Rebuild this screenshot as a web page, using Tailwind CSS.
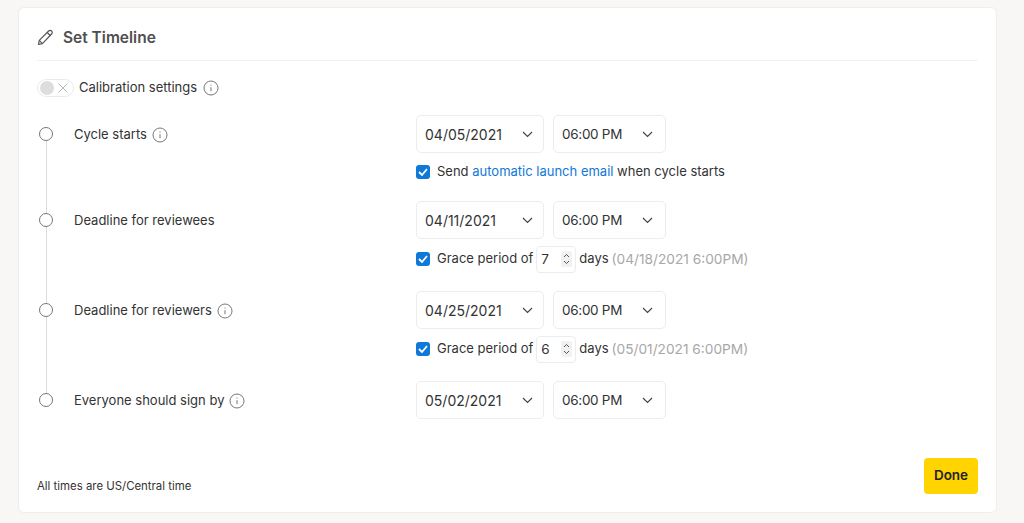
<!DOCTYPE html>
<html><head><meta charset="utf-8"><script src="https://cdn.jsdelivr.net/npm/@tailwindcss/browser@4"></script></head>
<body class="w-[1024px] h-[523px] overflow-hidden bg-[#f8f7f5] font-['Inter',sans-serif] text-[#333333] text-[13px]">
<div class="ml-[18px] mt-[7px] w-[979px] h-[506px] bg-white rounded-[6px] border border-[#eeeeec] px-[18px] flex flex-col">
  <div class="h-[53px] shrink-0 flex items-center gap-[9px] border-b border-[#f2f2f0] pt-[7px]">
    <svg class="w-[17px] h-[17px]" viewBox="0 0 17 17" fill="none" stroke="#555" stroke-width="1.2" stroke-linejoin="round"><path d="M1.5 15.5l.8-4.2L11.6 2a2 2 0 0 1 3 0 2.1 2.1 0 0 1 0 3l-9.2 9.6z"/><path d="M10.2 3.5l3.4 3.3M2.3 11.3l3.1 3.3"/></svg>
    <span class="text-[15.5px] font-semibold text-[#4f4f4f]">Set Timeline</span>
  </div>
  <div class="h-[20px] mt-[17px] shrink-0 flex items-center gap-[5px]">
    <div class="w-[37px] h-[18px] rounded-full border border-[#ebebeb] flex items-center pl-[2px] gap-[4px]">
      <span class="w-[14px] h-[14px] rounded-full bg-[#dddddd]"></span>
      <svg class="w-[10px] h-[10px]" viewBox="0 0 10 10" stroke="#b5b5b5" stroke-width="1"><path d="M.5.5l9 9M9.5.5l-9 9"/></svg>
    </div>
    <span>Calibration settings</span>
    <svg class="w-[16px] h-[16px] ml-[1px]" viewBox="0 0 16 16" fill="none" stroke="#777" stroke-width="1"><circle cx="8" cy="8" r="7"/><path d="M8 7.2v4M8 4.6v1"/></svg>
  </div>
  <div class="mt-[17px] flex flex-col">
    <!-- Row 1 -->
    <div class="h-[86px] flex">
      <div class="w-[18px] flex flex-col items-center mr-[19px] pt-[12px]">
        <span class="w-[14px] h-[14px] shrink-0 rounded-full border border-[#777]"></span><span class="w-px flex-1 bg-[#dddddd]"></span>
      </div>
      <div class="w-[342px] h-[40px] flex items-center gap-[5px]"><span>Cycle starts</span>
        <svg class="w-[16px] h-[16px]" viewBox="0 0 16 16" fill="none" stroke="#777" stroke-width="1"><circle cx="8" cy="8" r="7"/><path d="M8 7.2v4M8 4.6v1"/></svg></div>
      <div class="flex flex-col">
        <div class="flex gap-[9px]">
          <div class="w-[128px] h-[38px] border border-[#ececec] rounded-[5px] flex items-center justify-between pl-[8px] pr-[10px] text-[14px]">04/05/2021<svg class="w-[11px] h-[7px]" viewBox="0 0 11 7" fill="none" stroke="#444" stroke-width="1.2"><path d="M1 1l4.5 4.5L10 1"/></svg></div>
          <div class="w-[113px] h-[38px] border border-[#ececec] rounded-[5px] flex items-center justify-between pl-[8px] pr-[12px] text-[13.5px] tracking-[-0.3px]">06:00 PM<svg class="w-[11px] h-[7px]" viewBox="0 0 11 7" fill="none" stroke="#444" stroke-width="1.2"><path d="M1 1l4.5 4.5L10 1"/></svg></div>
        </div>
        <div class="h-[20px] mt-[9px] flex items-center gap-[7px]">
          <span class="w-[14px] h-[14px] rounded-[3px] bg-[#0f78d8] flex items-center justify-center"><svg class="w-[10px] h-[8px]" viewBox="0 0 10 8" fill="none" stroke="#fff" stroke-width="1.8"><path d="M1 4l3 3 5-6"/></svg></span>
          <span>Send <span class="text-[#0f78d8]">automatic launch email</span> when cycle starts</span>
        </div>
      </div>
    </div>
    <!-- Row 2 -->
    <div class="h-[90px] flex">
      <div class="w-[18px] flex flex-col items-center mr-[19px]">
        <span class="w-px h-[12px] bg-[#dddddd]"></span><span class="w-[14px] h-[14px] shrink-0 rounded-full border border-[#777]"></span><span class="w-px flex-1 bg-[#dddddd]"></span>
      </div>
      <div class="w-[342px] h-[40px] flex items-center"><span>Deadline for reviewees</span></div>
      <div class="flex flex-col">
        <div class="flex gap-[9px]">
          <div class="w-[128px] h-[38px] border border-[#ececec] rounded-[5px] flex items-center justify-between pl-[8px] pr-[10px] text-[14px]">04/11/2021<svg class="w-[11px] h-[7px]" viewBox="0 0 11 7" fill="none" stroke="#444" stroke-width="1.2"><path d="M1 1l4.5 4.5L10 1"/></svg></div>
          <div class="w-[113px] h-[38px] border border-[#ececec] rounded-[5px] flex items-center justify-between pl-[8px] pr-[12px] text-[13.5px] tracking-[-0.3px]">06:00 PM<svg class="w-[11px] h-[7px]" viewBox="0 0 11 7" fill="none" stroke="#444" stroke-width="1.2"><path d="M1 1l4.5 4.5L10 1"/></svg></div>
        </div>
        <div class="h-[28px] mt-[6px] flex items-center">
          <span class="w-[14px] h-[14px] mr-[7px] rounded-[3px] bg-[#0f78d8] flex items-center justify-center"><svg class="w-[10px] h-[8px]" viewBox="0 0 10 8" fill="none" stroke="#fff" stroke-width="1.8"><path d="M1 4l3 3 5-6"/></svg></span>
          <span>Grace period of</span>
          <div class="w-[40px] h-[27px] ml-[3px] mr-[3px] border border-[#ececec] rounded-[4px] flex items-center justify-between pl-[4px] pr-[3px] text-[13.5px]">7<svg class="w-[11px] h-[16px]" viewBox="0 0 11 16"><rect width="11" height="16" rx="2" fill="#f1f1f1"/><path d="M3 6l2.5-2.5L8 6M3 10l2.5 2.5L8 10" fill="none" stroke="#555" stroke-width="1"/></svg></div>
          <span>days</span><span class="ml-[3px] text-[13.7px] text-[#a8a8a8]">(04/18/2021 6:00PM)</span>
        </div>
      </div>
    </div>
    <!-- Row 3 -->
    <div class="h-[90px] flex">
      <div class="w-[18px] flex flex-col items-center mr-[19px]">
        <span class="w-px h-[12px] bg-[#dddddd]"></span><span class="w-[14px] h-[14px] shrink-0 rounded-full border border-[#777]"></span><span class="w-px flex-1 bg-[#dddddd]"></span>
      </div>
      <div class="w-[342px] h-[40px] flex items-center gap-[5px]"><span>Deadline for reviewers</span>
        <svg class="w-[16px] h-[16px]" viewBox="0 0 16 16" fill="none" stroke="#777" stroke-width="1"><circle cx="8" cy="8" r="7"/><path d="M8 7.2v4M8 4.6v1"/></svg></div>
      <div class="flex flex-col">
        <div class="flex gap-[9px]">
          <div class="w-[128px] h-[38px] border border-[#ececec] rounded-[5px] flex items-center justify-between pl-[8px] pr-[10px] text-[14px]">04/25/2021<svg class="w-[11px] h-[7px]" viewBox="0 0 11 7" fill="none" stroke="#444" stroke-width="1.2"><path d="M1 1l4.5 4.5L10 1"/></svg></div>
          <div class="w-[113px] h-[38px] border border-[#ececec] rounded-[5px] flex items-center justify-between pl-[8px] pr-[12px] text-[13.5px] tracking-[-0.3px]">06:00 PM<svg class="w-[11px] h-[7px]" viewBox="0 0 11 7" fill="none" stroke="#444" stroke-width="1.2"><path d="M1 1l4.5 4.5L10 1"/></svg></div>
        </div>
        <div class="h-[28px] mt-[6px] flex items-center">
          <span class="w-[14px] h-[14px] mr-[7px] rounded-[3px] bg-[#0f78d8] flex items-center justify-center"><svg class="w-[10px] h-[8px]" viewBox="0 0 10 8" fill="none" stroke="#fff" stroke-width="1.8"><path d="M1 4l3 3 5-6"/></svg></span>
          <span>Grace period of</span>
          <div class="w-[40px] h-[27px] ml-[3px] mr-[3px] border border-[#ececec] rounded-[4px] flex items-center justify-between pl-[4px] pr-[3px] text-[13.5px]">6<svg class="w-[11px] h-[16px]" viewBox="0 0 11 16"><rect width="11" height="16" rx="2" fill="#f1f1f1"/><path d="M3 6l2.5-2.5L8 6M3 10l2.5 2.5L8 10" fill="none" stroke="#555" stroke-width="1"/></svg></div>
          <span>days</span><span class="ml-[3px] text-[13.7px] text-[#a8a8a8]">(05/01/2021 6:00PM)</span>
        </div>
      </div>
    </div>
    <!-- Row 4 -->
    <div class="h-[38px] flex">
      <div class="w-[18px] flex flex-col items-center mr-[19px]">
        <span class="w-px h-[12px] bg-[#dddddd]"></span><span class="w-[14px] h-[14px] shrink-0 rounded-full border border-[#777]"></span>
      </div>
      <div class="w-[342px] h-[40px] flex items-center gap-[5px]"><span>Everyone should sign by</span>
        <svg class="w-[16px] h-[16px]" viewBox="0 0 16 16" fill="none" stroke="#777" stroke-width="1"><circle cx="8" cy="8" r="7"/><path d="M8 7.2v4M8 4.6v1"/></svg></div>
      <div class="flex gap-[9px]">
        <div class="w-[128px] h-[38px] border border-[#ececec] rounded-[5px] flex items-center justify-between pl-[8px] pr-[10px] text-[14px]">05/02/2021<svg class="w-[11px] h-[7px]" viewBox="0 0 11 7" fill="none" stroke="#444" stroke-width="1.2"><path d="M1 1l4.5 4.5L10 1"/></svg></div>
        <div class="w-[113px] h-[38px] border border-[#ececec] rounded-[5px] flex items-center justify-between pl-[8px] pr-[12px] text-[13.5px] tracking-[-0.3px]">06:00 PM<svg class="w-[11px] h-[7px]" viewBox="0 0 11 7" fill="none" stroke="#444" stroke-width="1.2"><path d="M1 1l4.5 4.5L10 1"/></svg></div>
      </div>
    </div>
  </div>
  <div class="mt-[39px] h-[36px] flex items-end justify-between">
    <span class="text-[11.4px] mb-[-1px]">All times are US/Central time</span>
    <button class="w-[54px] h-[36px] rounded-[4px] bg-[#ffd400] text-[13.5px] font-semibold text-[#222] pb-[2px]">Done</button>
  </div>
</div>
</body></html>
